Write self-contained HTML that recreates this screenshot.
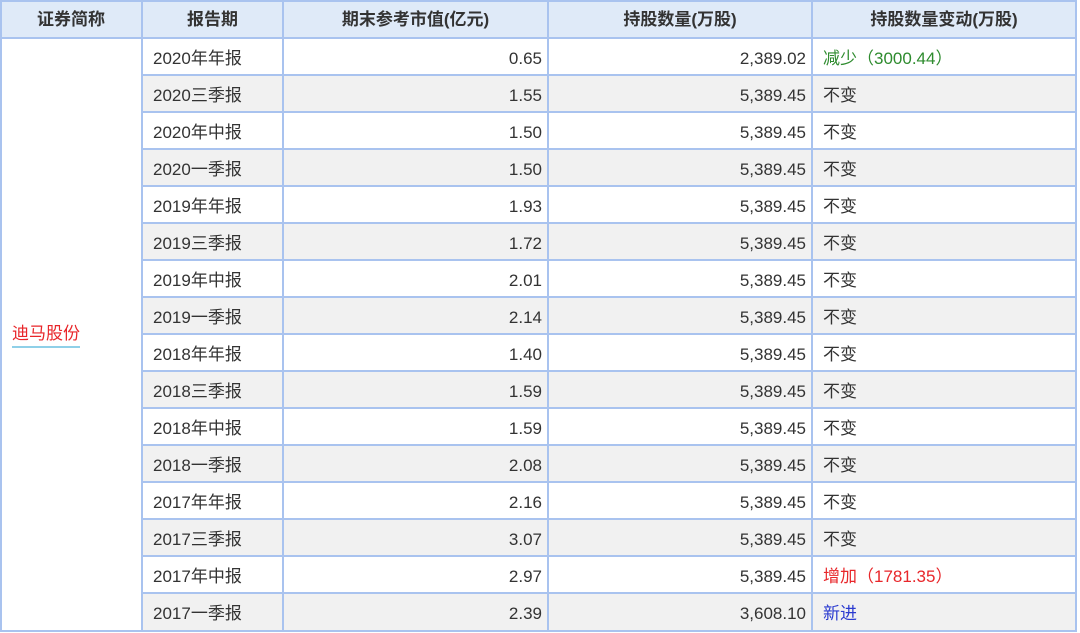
<!DOCTYPE html>
<html><head><meta charset="utf-8"><style>
body{margin:0;width:1080px;height:633px;background:#fff;position:relative;overflow:hidden;font-family:"Liberation Sans","Noto Sans CJK SC",sans-serif;font-size:17px;color:#333}
.h{position:absolute;left:0;top:0;width:1077px;height:38px;background:#dfeaf8}
.r{position:absolute;left:142px;width:935px;height:37px}
.s{background:#f1f1f1}
.v{position:absolute;top:0;width:2px;height:632px;background:#a9c3ef}
.l{position:absolute;left:0;width:1077px;height:2px;background:#a9c3ef}
.t{position:absolute;line-height:37px;white-space:nowrap;margin-top:2px}
.hd{position:absolute;top:1px;line-height:38px;font-weight:bold;text-align:center;color:#333}
.n{text-align:right}
</style></head><body>
<div class="h"></div>
<div id="rows"></div>
<script>
var d=[["2020年年报","0.65","2,389.02","减少（3000.44）","#2e8b2e"],["2020三季报","1.55","5,389.45","不变"],["2020年中报","1.50","5,389.45","不变"],["2020一季报","1.50","5,389.45","不变"],["2019年年报","1.93","5,389.45","不变"],["2019三季报","1.72","5,389.45","不变"],["2019年中报","2.01","5,389.45","不变"],["2019一季报","2.14","5,389.45","不变"],["2018年年报","1.40","5,389.45","不变"],["2018三季报","1.59","5,389.45","不变"],["2018年中报","1.59","5,389.45","不变"],["2018一季报","2.08","5,389.45","不变"],["2017年年报","2.16","5,389.45","不变"],["2017三季报","3.07","5,389.45","不变"],["2017年中报","2.97","5,389.45","增加（1781.35）","#e8262a"],["2017一季报","2.39","3,608.10","新进","#2b3bd0"]];
var h='';
d.forEach(function(r,i){var y=38+i*37;
if(i%2)h+='<div class="r s" style="top:'+y+'px"></div>';
h+='<div class="t" style="left:153px;top:'+y+'px">'+r[0]+'</div>';
h+='<div class="t n" style="left:300px;width:242px;top:'+y+'px">'+r[1]+'</div>';
h+='<div class="t n" style="left:560px;width:246px;top:'+y+'px">'+r[2]+'</div>';
h+='<div class="t" style="left:823px;top:'+y+'px;color:'+(r[4]||'#333')+'">'+r[3]+'</div>';
h+='<div class="l" style="left:142px;width:935px;top:'+(y-1)+'px"></div>';});
[0,141,282,547,811,1075].forEach(function(x){h+='<div class="v" style="left:'+x+'px"></div>'});
h+='<div class="l" style="top:0"></div><div class="l" style="top:37px"></div><div class="l" style="top:630px"></div>';
document.getElementById('rows').innerHTML=h;
</script>
<div class="hd" style="left:0;width:142px">证券简称</div>
<div class="hd" style="left:142px;width:141px">报告期</div>
<div class="hd" style="left:283px;width:265px">期末参考市值(亿元)</div>
<div class="hd" style="left:548px;width:264px">持股数量(万股)</div>
<div class="hd" style="left:812px;width:264px">持股数量变动(万股)</div>
<div style="position:absolute;left:12px;top:322px;color:#e8262a;line-height:24px;border-bottom:2px solid #8fd0e8;white-space:nowrap">迪马股份</div>
</body></html>
